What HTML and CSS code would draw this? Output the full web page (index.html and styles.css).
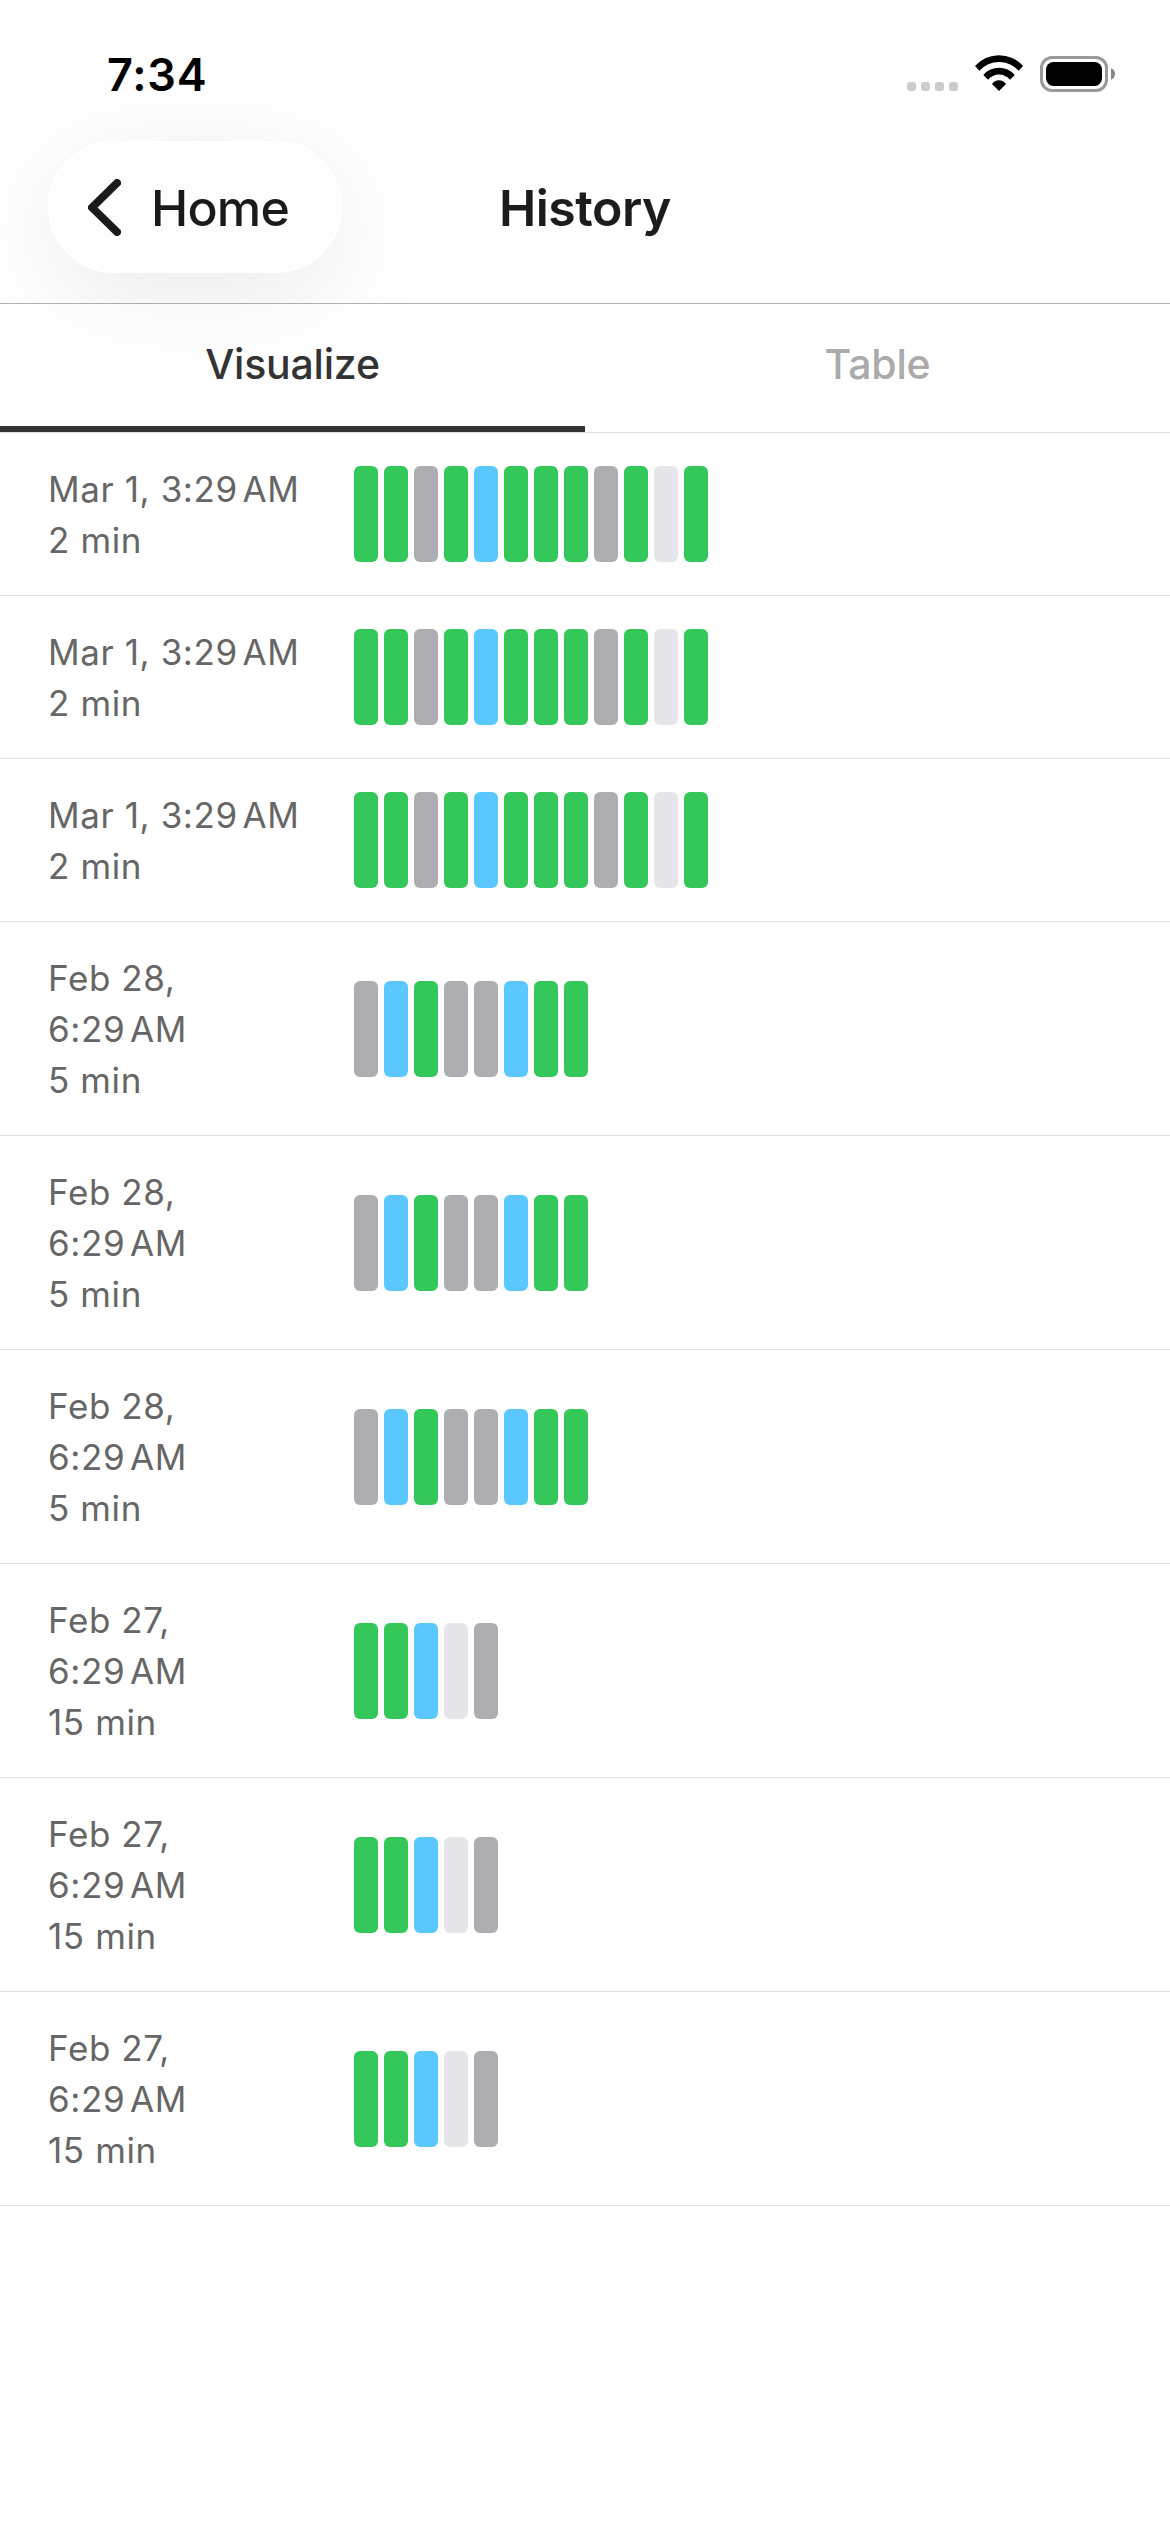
FILE: index.html
```
<!DOCTYPE html>
<html lang="en">
<head>
  <meta charset="utf-8">
  <title>History</title>
  <link rel="stylesheet" href="styles.css">
</head>
<body>
  <div class="status-bar">
    <span class="time">7:34</span>
    <svg class="status-icons" width="210" height="38" viewBox="906 55 210 38">
      <!-- signal -->
      <g fill="#cccccc">
        <rect x="907" y="82" width="9" height="9" rx="3" />
        <rect x="921" y="82" width="9" height="9" rx="3" />
        <rect x="935" y="82" width="9" height="9" rx="3" />
        <rect x="949" y="82" width="9" height="9" rx="3" />
      </g>
      <!-- wifi -->
      <path d="M975 66A32 32 0 0 1 1023 66L1018.6 70.8A26 26 0 0 0 979.4 70.8Z" />
      <path d="M983.3 75A20.5 20.5 0 0 1 1014.7 75L1010 79.7A14.4 14.4 0 0 0 988 79.7Z" />
      <path d="M992 84A8.5 8.5 0 0 1 1006 84L999 91Z" />
      <!-- battery -->
      <rect x="1041.5" y="57.5" width="65" height="33" rx="10.5" fill="none" stroke="#999999" stroke-width="3" />
      <rect x="1046" y="62" width="56" height="24" rx="7.5" />
      <path d="M1111 68.2C1113.6 69.2 1115 71.4 1115 74S1113.6 78.8 1111 79.8Z" fill="#888888" />
    </svg>
  </div>

  <header class="header">
    <a class="back" href="#">
      <svg width="33" height="57" viewBox="0 0 33 57">
        <path d="M29 4L4 28.5L29 53" />
      </svg>
      <span>Home</span>
    </a>
    <h1 class="title">History</h1>
  </header>

  <nav class="tabs">
    <a class="tab active" href="#">Visualize</a>
    <a class="tab" href="#">Table</a>
  </nav>

  <main class="list">
    <div class="row">
      <div class="when">Mar 1, 3:29<span class="nnbsp">&#8239;</span>AM<br>2 min</div>
      <div class="bars">
        <i class="green"></i><i class="green"></i><i class="gray"></i><i class="green"></i><i class="blue"></i><i class="green"></i>
        <i class="green"></i><i class="green"></i><i class="gray"></i><i class="green"></i><i class="light"></i><i class="green"></i>
      </div>
    </div>
    <div class="row">
      <div class="when">Mar 1, 3:29<span class="nnbsp">&#8239;</span>AM<br>2 min</div>
      <div class="bars">
        <i class="green"></i><i class="green"></i><i class="gray"></i><i class="green"></i><i class="blue"></i><i class="green"></i>
        <i class="green"></i><i class="green"></i><i class="gray"></i><i class="green"></i><i class="light"></i><i class="green"></i>
      </div>
    </div>
    <div class="row">
      <div class="when">Mar 1, 3:29<span class="nnbsp">&#8239;</span>AM<br>2 min</div>
      <div class="bars">
        <i class="green"></i><i class="green"></i><i class="gray"></i><i class="green"></i><i class="blue"></i><i class="green"></i>
        <i class="green"></i><i class="green"></i><i class="gray"></i><i class="green"></i><i class="light"></i><i class="green"></i>
      </div>
    </div>
    <div class="row">
      <div class="when">Feb 28,<br>6:29<span class="nnbsp">&#8239;</span>AM<br>5 min</div>
      <div class="bars">
        <i class="gray"></i><i class="blue"></i><i class="green"></i><i class="gray"></i>
        <i class="gray"></i><i class="blue"></i><i class="green"></i><i class="green"></i>
      </div>
    </div>
    <div class="row">
      <div class="when">Feb 28,<br>6:29<span class="nnbsp">&#8239;</span>AM<br>5 min</div>
      <div class="bars">
        <i class="gray"></i><i class="blue"></i><i class="green"></i><i class="gray"></i>
        <i class="gray"></i><i class="blue"></i><i class="green"></i><i class="green"></i>
      </div>
    </div>
    <div class="row">
      <div class="when">Feb 28,<br>6:29<span class="nnbsp">&#8239;</span>AM<br>5 min</div>
      <div class="bars">
        <i class="gray"></i><i class="blue"></i><i class="green"></i><i class="gray"></i>
        <i class="gray"></i><i class="blue"></i><i class="green"></i><i class="green"></i>
      </div>
    </div>
    <div class="row">
      <div class="when">Feb 27,<br>6:29<span class="nnbsp">&#8239;</span>AM<br>15 min</div>
      <div class="bars">
        <i class="green"></i><i class="green"></i><i class="blue"></i><i class="light"></i><i class="gray"></i>
      </div>
    </div>
    <div class="row">
      <div class="when">Feb 27,<br>6:29<span class="nnbsp">&#8239;</span>AM<br>15 min</div>
      <div class="bars">
        <i class="green"></i><i class="green"></i><i class="blue"></i><i class="light"></i><i class="gray"></i>
      </div>
    </div>
    <div class="row">
      <div class="when">Feb 27,<br>6:29<span class="nnbsp">&#8239;</span>AM<br>15 min</div>
      <div class="bars">
        <i class="green"></i><i class="green"></i><i class="blue"></i><i class="light"></i><i class="gray"></i>
      </div>
    </div>
  </main>
</body>
</html>
```

FILE: styles.css
```
* {
  box-sizing: border-box;
}

body {
  margin: 0;
  background: #fff;
  font-family: Inter, "Liberation Sans", sans-serif;
}

a {
  text-decoration: none;
}

/* Status bar */
.status-bar {
  display: flex;
  align-items: center;
  justify-content: space-between;
  height: 141px;
  padding: 7px 54px 0 107px;
}

.time {
  font-size: 45px;
  font-weight: 600;
  letter-spacing: 0.8px;
  color: #000;
}

/* Header */
.header {
  display: grid;
  grid-template-columns: 1fr auto 1fr;
  height: 163px;
  padding: 0 48px;
  border-bottom: 1px solid #b3b3b3;
}

.back {
  display: flex;
  align-items: center;
  gap: 30px;
  width: 294px;
  height: 132px;
  padding-left: 38px;
  border: 2px solid #fff;
  border-radius: 66px;
  background: #fdfdfd;
  box-shadow: 0 24px 115px rgba(0, 0, 0, 0.085);
  color: #1a1a1a;
  font-size: 50px;
  font-weight: 500;
  letter-spacing: -0.8px;
}

.back span {
  padding-top: 2px;
}

.back path {
  fill: none;
  stroke: #1a1a1a;
  stroke-width: 8;
  stroke-linecap: round;
  stroke-linejoin: round;
}

.title {
  margin: 0;
  padding-top: 1px;
  font-size: 50px;
  font-weight: 600;
  line-height: 132px;
  letter-spacing: -0.5px;
  color: #1c1c1e;
}

/* Tabs */
.tabs {
  position: relative;
  display: flex;
  height: 129px;
  border-bottom: 1px solid #e0e0e0;
  background: rgba(255, 255, 255, 0.4);
}

.tab {
  flex: 1;
  border-bottom: 6px solid transparent;
  font-size: 41px;
  font-weight: 500;
  line-height: 120px;
  letter-spacing: -0.2px;
  text-align: center;
  color: #aaa;
}

.tab.active {
  color: #333;
  border-bottom-color: #333;
}

/* History rows */
.row {
  display: flex;
  align-items: center;
  gap: 48px;
  padding: 30px 48px;
  border-bottom: 1px solid #e0e0e0;
}

.when {
  width: 258px;
  margin: 1px 0 -1px;
  font-size: 35px;
  line-height: 51px;
  letter-spacing: 0.6px;
  color: #666;
}

.nnbsp {
  letter-spacing: -1.6px;
}

.bars {
  display: flex;
  gap: 6px;
}

.bars i {
  width: 24px;
  height: 96px;
  border-radius: 6px;
}

.green {
  background: #34c759;
}

.blue {
  background: #5ac8fe;
}

.gray {
  background: #aeaeb2;
}

.light {
  background: #e5e5ea;
}
```
